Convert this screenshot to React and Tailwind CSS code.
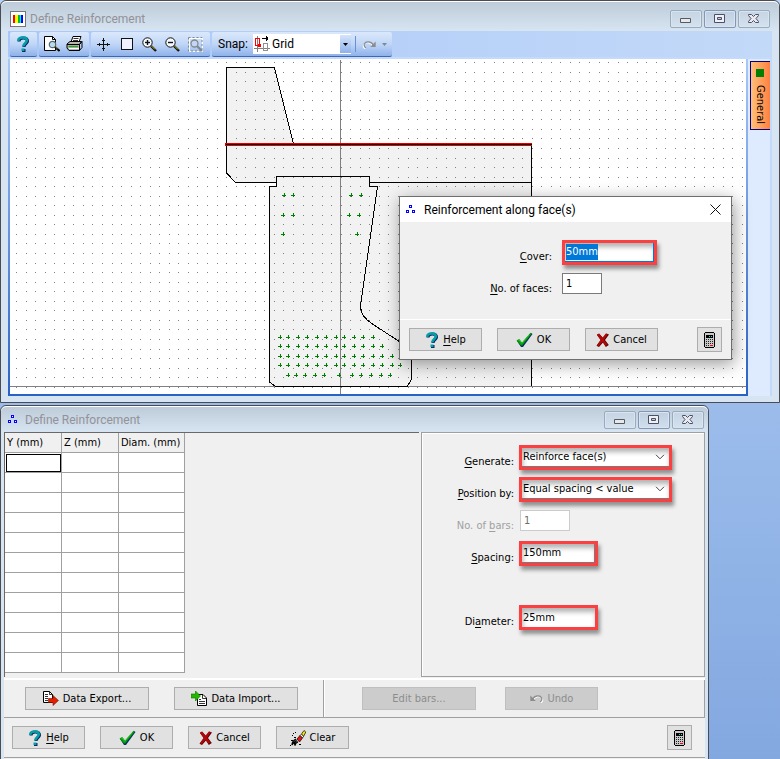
import React, { useEffect, useRef } from "react";

const GRID_STEP = 9.55;

// dots of the snap grid, one 1px square each
const gridDots = (() => {
  let d = "";
  for (let row = 0; row < 35; row++) {
    for (let col = 0; col < 200; col++) {
      d += `M${Math.round(6 + col * GRID_STEP)} ${Math.round(3 + row * GRID_STEP)}h1v1h-1z`;
    }
  }
  return d;
})();

const tendonRows = [
  { y: 136, xs: [274, 283] },
  { y: 136, xs: [341, 351] },
  { y: 156, xs: [273, 283, 339, 349] },
  { y: 175, xs: [273, 347] },
  { y: 278, xs: [270, 278, 288, 297, 307, 316, 326, 334, 344, 353, 363] },
  { y: 287, xs: [270, 278, 288, 297, 307, 316, 326, 334, 344, 353, 363, 372] },
  { y: 297, xs: [270, 278, 288, 297, 307, 316, 326, 334, 344, 353, 363, 372, 382] },
  { y: 306, xs: [270, 278, 288, 297, 307, 316, 326, 334, 344, 353, 363, 372, 382, 390] },
  { y: 316, xs: [278, 286, 295, 305, 314, 329, 342, 351, 361, 371, 380] },
];

const tendons = tendonRows
  .map(({ y, xs }) => xs.map((x) => `M${x - 2} ${y}h4v1h-4zM${x} ${y - 2}h1v4h-1z`).join(""))
  .join("");

/* ---------- icons ---------- */

const HelpIcon = ({ className = "w-[14px] h-4" }) => (
  <svg viewBox="0 0 14 16" className={className} aria-hidden="true">
    <path d="M3 5.5C3 2.5 5 2 7.5 2s4 1 4 3.2C11.5 7.5 8 8 8 11" fill="none" stroke="#0a1f5c" strokeWidth="3" />
    <path d="M2.2 5C2.2 2 4.5 1.5 7 1.5s3.8 1 3.8 3C10.8 7 7.2 7.5 7.2 10.5" fill="none" stroke="#00a0a8" strokeWidth="2.6" />
    <path d="M6 13h3.5v3H6z" fill="#0a1f5c" />
    <path d="M5.5 12.5h3v2.6h-3z" fill="#00a0a8" />
  </svg>
);

const CheckIcon = () => (
  <svg viewBox="0 0 17 16" className="w-[17px] h-4" aria-hidden="true">
    <path d="M1 9l2.5-1.5L6 11 15 1l1.5 1L7 15H5z" fill="#0b2d6b" />
    <path d="M.5 8.5L3 7l3 3.5L14.5.8l1.3.6L6.2 13.6H5z" fill="#00a000" />
    <path d="M2 8.2l1-.4 2.8 3.6L13 3" fill="none" stroke="#35d035" strokeWidth=".8" />
  </svg>
);

const CrossIcon = () => (
  <svg viewBox="0 0 13 14" className="w-[13px] h-[14px]" aria-hidden="true">
    <path d="M1 2l2-1.2L7 5l3.5-4.5L13 1.5 9 7l3.8 5-3 2L7 9.500 3 14 .5 12.8 4.6 7z" fill="#5a0000" />
    <path d="M.8 1.6L3.2.6 6.6 4.6 9.8.4l2 .8L8 6.8l3.6 4.800-2.200 1.200-3-4-3.600 4.400-1.800-.9L4.800 7z" fill="#b00808" />
  </svg>
);

const CalculatorIcon = () => (
  <svg viewBox="0 0 11 16" className="w-[11px] h-4" shapeRendering="crispEdges" aria-hidden="true">
    <path d="M1 0h9v1h1v14h-1v1H1v-1H0V1h1z" fill="#000" />
    <path d="M1 1h9v14H1z" fill="#c8c8c8" />
    <path d="M2 3h7v3H2z" fill="#000" />
    <path d="M5 4h1v1H5zM7 4h1v1H7z" fill="#00e0d0" />
    <path d="M2 7h1v1H2zM4 7h1v1H4zM6 7h1v1H6zM8 7h1v1H8zM2 9h1v1H2zM4 9h1v1H4zM6 9h1v1H6zM8 9h1v1H8zM2 11h1v1H2zM4 11h1v1H4zM6 11h1v1H6zM8 11h1v1H8zM2 13h1v1H2zM4 13h1v1H4z" fill="#222" />
    <path d="M6 13h3v1H6z" fill="#f00" />
  </svg>
);

const ExportIcon = () => (
  <svg viewBox="0 0 16 15" className="w-4 h-[15px]" aria-hidden="true">
    <path d="M.5.5h6l3 3v8h-9z" fill="#fff" stroke="#000" />
    <path d="M6.5.5v3h3M2 3.5h3M2 5.5h3M2 7.5h3M2 9.5h3" fill="none" stroke="#000" strokeWidth=".8" />
    <path d="M5.5 7.5H10V4.5l5.500 5L10 14.500v-3H5.500z" fill="#e02000" stroke="#7a1500" strokeWidth=".6" />
  </svg>
);

const ImportIcon = () => (
  <svg viewBox="0 0 16 15" className="w-4 h-[15px]" aria-hidden="true">
    <path d="M6.5 3.5H12l3.5 3.5v7.5h-9z" fill="#fff" stroke="#000" />
    <path d="M11.5 3.5v4h4M8 8.5h2M8 10.5h6M8 12.5h6" fill="none" stroke="#000" strokeWidth=".8" />
    <path d="M0 3h4.500V0l5 5-5 5V7H0z" fill="#22b800" stroke="#127000" strokeWidth=".6" />
  </svg>
);

const ClearIcon = () => (
  <svg viewBox="0 0 16 16" className="w-4 h-4" aria-hidden="true">
    <path d="M11.5 4L14 .5l1.800 1.500-2.300 4.500z" fill="#ffe800" stroke="#000" strokeWidth=".7" />
    <path d="M10 5.500L11.500 4l2 2.500L12.500 8z" fill="#fff" stroke="#000" strokeWidth=".6" />
    <path d="M7 9l3-3.500L12.500 8l-3 4z" fill="#e81010" stroke="#000" strokeWidth=".7" />
    <path d="M6 9c-2 1-4 3-4 6 1-2 2-2.500 3-3-.5 1-.5 2 0 3 .5-2 1.500-2.500 3-3" fill="#444" stroke="#000" strokeWidth="1.300" />
    <path d="M1 10.500h2M4 7.500h2M3 3.500h1M5 2.500h1M2 5.500h1M9 14.500h2M0 15.500h1" stroke="#000" />
  </svg>
);

const UndoIcon = ({ flip }) => (
  <svg viewBox="0 0 14 9" className={flip ? "w-[14px] h-[9px] -scale-x-100" : "w-[14px] h-[9px]"} aria-hidden="true">
    <path d="M3 6.500C5 2 11 1.500 12.500 5c.4 2-1 3.500-2 4" fill="none" stroke="#fff" strokeWidth="1.200" />
    <path d="M2 6C4.500 1 10 .8 11.800 4c.6 2-.6 3.200-1.600 4" fill="none" stroke="#8c8c8c" strokeWidth="1.300" />
    <path d="M.3 1.500V7h5.500z" fill="#8c8c8c" />
  </svg>
);

const BarsIcon = () => (
  <svg viewBox="0 0 9 9" className="w-[9px] h-[9px]" shapeRendering="crispEdges" aria-hidden="true">
    <path d="M3.5.5h2v2h-2zM.5 5.5h2v2h-2zM6.500 5.500h2v2h-2z" fill="#fff" stroke="#00f" />
  </svg>
);

const AppIcon = () => (
  <svg viewBox="0 0 16 16" className="w-4 h-4" shapeRendering="crispEdges" aria-hidden="true">
    <path d="M.5.5h15v15H.5z" fill="#fff" stroke="#777" />
    <path d="M3 4h2v8H3z" fill="#f00" />
    <path d="M5 4h3v8H5z" fill="#ff0" />
    <path d="M8 4h2v8H8z" fill="#00c020" />
    <path d="M10 4h1v8h-1z" fill="#0ee" />
    <path d="M11 4h2v8h-2z" fill="#00f" />
    <path d="M0 15h1v1H0z" fill="#f0f" />
  </svg>
);

const PreviewIcon = () => (
  <svg viewBox="0 0 16 16" className="w-4 h-4" aria-hidden="true">
    <path d="M.5.5h8l3 3v11H.5z" fill="#fff" stroke="#000" />
    <path d="M8.500.5v3h3" fill="none" stroke="#000" />
    <circle cx="8.500" cy="8.500" r="3.200" fill="#b8dcec" stroke="#5a6670" strokeWidth="1.200" />
    <path d="M11 11l4.500 4" stroke="#000" strokeWidth="2" />
    <path d="M11.500 11l2 1.800" stroke="#e0c000" strokeWidth=".8" />
  </svg>
);

const PrintIcon = () => (
  <svg viewBox="0 0 17 16" className="w-[17px] h-4" aria-hidden="true">
    <path d="M5 6l2-5.500h8L13 6z" fill="#fff" stroke="#000" />
    <path d="M7.500 2.500h5M7 4.500h5" stroke="#000" strokeWidth=".8" />
    <path d="M1 8l3-2.500h11.500l-2 3v6H3L1 12z" fill="#b8b8b0" stroke="#000" />
    <path d="M1 8.500h12.500l2.500-3v6l-2.500 3" fill="none" stroke="#000" />
    <path d="M2.500 10.500h9.500" stroke="#28a028" strokeWidth="1.400" />
    <path d="M3 12.500h10" stroke="#fff" />
  </svg>
);

const PanIcon = () => (
  <svg viewBox="0 0 13 13" className="w-[13px] h-[13px]" shapeRendering="crispEdges" aria-hidden="true">
    <path d="M6 1h1v11H6zM1 6h11v1H1zM5 2h3v1H5zM5 10h3v1H5zM2 5h1v3H2zM10 5h1v3h-1zM6 0h1v1H6zM6 12h1v1H6zM0 6h1v1H0zM12 6h1v1h-1z" fill="#111" />
  </svg>
);

const ExtentsIcon = () => (
  <svg viewBox="0 0 12 12" className="w-3 h-3" shapeRendering="crispEdges" aria-hidden="true">
    <path d="M.5.5h11v11H.5z" fill="#f0f0ff" stroke="#111" />
  </svg>
);

const ZoomIcon = ({ plus }) => (
  <svg viewBox="0 0 15 15" className="w-[15px] h-[15px]" aria-hidden="true">
    <circle cx="5.500" cy="5.500" r="4.700" fill="#f4f8ff" stroke="#111" />
    <path d="M3 5.500h5" stroke="#111" strokeWidth="1.400" />
    {plus && <path d="M5.500 3v5" stroke="#111" strokeWidth="1.400" />}
    <path d="M9 9l5 5" stroke="#111" strokeWidth="2.400" />
    <path d="M9.500 9l3.500 3.500" stroke="#e8c800" strokeWidth=".9" />
  </svg>
);

const ZoomWindowIcon = () => (
  <svg viewBox="0 0 15 15" className="w-[15px] h-[15px]" aria-hidden="true">
    <path d="M1.500 1.500h13v13h-13z" fill="none" stroke="#fff" />
    <path d="M.5.5H14V14H.5z" fill="none" stroke="#808890" strokeDasharray="2 2" />
    <circle cx="6.500" cy="6.500" r="3.500" fill="#c4d6f0" stroke="#808890" strokeWidth="1.300" />
    <path d="M9 9l5 5" stroke="#808890" strokeWidth="2.200" />
  </svg>
);

const SnapIcon = () => (
  <svg viewBox="0 0 16 16" className="w-4 h-4" aria-hidden="true" shapeRendering="crispEdges">
    <path d="M3 0h1v16H3zM0 12h16v1H0z" fill="#808080" />
    <path d="M1.500 2.500h4v7h-4z" fill="none" stroke="#f00" />
    <path d="M4 8h3v3H4z" fill="#f00" />
    <path d="M9.500 7.500h4v7h-4z" fill="none" stroke="#909090" />
    <path d="M8 2h6v1H8zM12 0h1v1h-1zM12 1h2v1h-2zM12 3h2v1h-2zM12 4h1v1h-1z" fill="#000" />
  </svg>
);

/* ---------- small controls ---------- */

// label text with its keyboard mnemonic underlined
const Mnemonic = ({ text, at }) => (
  <span>
    {text.slice(0, at)}
    <span className="underline underline-offset-2">{text[at]}</span>
    {text.slice(at + 1)}
  </span>
);

const PushButton = ({ icon, children, className = "w-[73px]", disabled }) => (
  <button
    type="button"
    disabled={disabled}
    className={`flex h-[23px] shrink-0 items-center justify-center gap-1 border border-[#adadad] bg-[#e1e1e1] disabled:border-[#bfbfbf] disabled:bg-[#cccccc] disabled:text-[#8c8c8c] ${className}`}
  >
    {icon}
    {children}
  </button>
);

const CalculatorButton = () => (
  <button type="button" aria-label="Calculator" className="ml-auto flex h-[25px] w-[25px] shrink-0 items-center justify-center border border-[#adadad] bg-[#e1e1e1]">
    <CalculatorIcon />
  </button>
);

// red frame drawn round a value the user has to fill in
const Marked = ({ className, children }) => (
  <div className={`relative flex h-[25px] border-3 border-[#fa4040] bg-white shadow-[2px_4px_4px_rgba(0,0,0,0.4),inset_1px_4px_5px_rgba(0,0,0,0.3)] ${className}`}>
    {children}
  </div>
);

const MarkedSelect = ({ id, options, className }) => (
  <Marked className={className}>
    <select id={id} className="w-full appearance-none border-b border-[#7a7a7a] bg-transparent pl-px outline-none">
      {options.map((option) => (
        <option key={option}>{option}</option>
      ))}
    </select>
    <svg viewBox="0 0 10 6" className="pointer-events-none absolute right-1 top-1.5 h-1.5 w-2.5" aria-hidden="true">
      <path d="M1 .8l4 4 4-4" fill="none" stroke="#444" />
    </svg>
  </Marked>
);

const CaptionButtons = () => (
  <div className="ml-auto flex gap-0.5">
    <button type="button" aria-label="Minimize" className="flex h-[18px] w-8 items-center justify-center rounded-xs border border-[#9aabbd] bg-linear-to-b from-[#c6d4e3] to-[#d4e1ee] shadow-[inset_0_0_0_1px_#d8e4f0]">
      <svg viewBox="0 0 12 12" className="h-3 w-3" aria-hidden="true">
        <path d="M.5 5.500h10v4H.5z" fill="#e8e8e8" stroke="#555b66" />
      </svg>
    </button>
    <button type="button" aria-label="Restore" className="flex h-[18px] w-8 items-center justify-center rounded-xs border border-[#8595b4] bg-linear-to-b from-[#c0cfe0] to-[#d0deed] shadow-[inset_0_0_0_1px_#d8e4f0]">
      <svg viewBox="0 0 12 12" className="h-3 w-3" aria-hidden="true">
        <path d="M.5 1.500h10v8H.5z" fill="#f0f0f4" stroke="#4a5068" />
        <path d="M3.500 4.500h4v2h-4z" fill="#c0ccdc" stroke="#4a5068" />
      </svg>
    </button>
    <button type="button" aria-label="Close" className="flex h-[18px] w-8 items-center justify-center rounded-xs border border-[#9aabbd] bg-linear-to-b from-[#c6d4e3] to-[#d4e1ee] shadow-[inset_0_0_0_1px_#d8e4f0]">
      <svg viewBox="0 0 12 12" className="h-3 w-3" aria-hidden="true">
        <path d="M.5 1.500h3l2 2 2-2h3v1L8 5.500l2.500 3v1h-3l-2-2-2 2h-3v-1L3 5.500l-2.500-3z" fill="#eaeaee" stroke="#4a5068" />
      </svg>
    </button>
  </div>
);

const ToolGroup = ({ children, className }) => (
  <div className={`flex h-[25px] items-center rounded-xs border-b border-[#3f66ae] bg-linear-to-b from-[#dbe8fb] via-[#c0d6f7] to-[#8fb2ea] ${className}`}>
    {children}
  </div>
);

const ToolButton = ({ label, children, disabled }) => (
  <button type="button" aria-label={label} disabled={disabled} className="flex h-6 w-[23px] items-center justify-center">
    {children}
  </button>
);

const Toolbar = () => (
  <div className="flex h-[26px] items-start gap-0.5 bg-linear-to-r from-[#a9c7f8] to-[#c3d9f8] px-0.5 pt-px">
    <ToolGroup className="w-[27px] pl-px">
      <ToolButton label="Help">
        <HelpIcon />
      </ToolButton>
    </ToolGroup>
    <ToolGroup className="w-[50px] pl-px">
      <ToolButton label="Print preview">
        <PreviewIcon />
      </ToolButton>
      <ToolButton label="Print">
        <PrintIcon />
      </ToolButton>
    </ToolGroup>
    <ToolGroup className="w-[119px] pl-px">
      <ToolButton label="Pan">
        <PanIcon />
      </ToolButton>
      <ToolButton label="Zoom extents">
        <ExtentsIcon />
      </ToolButton>
      <ToolButton label="Zoom in">
        <ZoomIcon plus />
      </ToolButton>
      <ToolButton label="Zoom out">
        <ZoomIcon />
      </ToolButton>
      <ToolButton label="Zoom window" disabled>
        <ZoomWindowIcon />
      </ToolButton>
    </ToolGroup>
    <ToolGroup className="w-[180px] pl-1.5">
      <label htmlFor="snap" className="w-[35px] text-xs font-[Roboto,sans-serif]">
        Snap:
      </label>
      <div className="flex h-5 w-[98px] items-center bg-white">
        <div className="pl-px">
          <SnapIcon />
        </div>
        <select id="snap" className="h-5 min-w-0 flex-1 appearance-none pl-0.5 text-xs font-[Roboto,sans-serif] outline-none">
          <option>Grid</option>
        </select>
        <div className="flex h-[18px] w-[11px] items-center justify-center bg-linear-to-b from-[#d4e4fb] to-[#8fb2ea]">
          <svg viewBox="0 0 5 3" className="h-[3px] w-[5px]" aria-hidden="true">
            <path d="M0 0h5L2.500 3z" />
          </svg>
        </div>
      </div>
      <div className="ml-1 mr-0.5 h-4 w-px bg-[#6b8fd0]" />
      <button type="button" aria-label="Redo" disabled className="flex h-5 items-center gap-1.5 px-1">
        <UndoIcon flip />
        <svg viewBox="0 0 5 3" className="h-[3px] w-[5px]" aria-hidden="true">
          <path d="M0 0h5L2.500 3z" fill="#7f8896" />
        </svg>
      </button>
    </ToolGroup>
  </div>
);

const SectionDrawing = () => (
  <svg className="block h-[335px] w-full" shapeRendering="crispEdges" role="img" aria-label="Beam and slab section">
    <g fill="#f2f2f2">
      <path d="M216 8h49l19 77h238v242H259V127h7v-4h-40l-10-9z" />
    </g>
    <path d={gridDots} fill="#808080" />
    <path d="M330.500 1v334M0 327.500h2000" stroke="#808080" fill="none" />
    <g fill="none" stroke="#000">
      <path d="M216.500 85V8.500h48L283.500 85" />
      <path d="M216.500 85v29l9 9.500h41M359.500 123.500h162M521.500 85v242" />
      <path d="M266.500 117.500h93v10h8L350.500 247c0 8 4 13 12 18l26 17 13 18v20.500l-4 6.500H265l-5.500-4V127.500h7z" />
    </g>
    <path d="M215 84h307v3H215z" fill="#e00000" />
    <path d="M216 85h306v1H216z" />
    <path d={tendons} fill="#008000" />
  </svg>
);

const FaceDialog = () => {
  const coverRef = useRef(null);

  useEffect(() => {
    coverRef.current?.focus();
    coverRef.current?.select();
  }, []);

  return (
    <div role="dialog" aria-label="Reinforcement along face(s)" className="absolute left-[391px] top-[137px] w-[333px] border border-[#6e6e6e] bg-[#f0f0f0] shadow-[2px_4px_16px_rgba(0,0,0,0.4)]">
      <div className="flex h-[25px] items-center bg-white pl-1.5 pr-2.5">
        <BarsIcon />
        <h2 className="ml-[9px] text-xs font-[Roboto,sans-serif]">Reinforcement along face(s)</h2>
        <button type="button" aria-label="Close" className="ml-auto">
          <svg viewBox="0 0 11 11" className="h-[11px] w-[11px]" aria-hidden="true">
            <path d="M.5.5l10 10M10.500.5l-10 10" stroke="#111" fill="none" />
          </svg>
        </button>
      </div>
      <div className="grid h-[97px] grid-cols-[152px_1fr] content-start gap-x-2.5 pt-[18px]">
        <label htmlFor="cover" className="flex h-8 items-center justify-end pt-0.5">
          <Mnemonic text="Cover:" at={0} />
        </label>
        <Marked className="w-[95px]">
          <input id="cover" ref={coverRef} defaultValue="50mm" className="w-full border-b border-r border-[#0078d7] bg-transparent pl-px outline-none selection:bg-[#0078d7] selection:text-white" />
        </Marked>
        <label htmlFor="faces" className="flex h-8 items-center justify-end pt-0.5">
          <Mnemonic text="No. of faces:" at={0} />
        </label>
        <input id="faces" defaultValue="1" className="mt-px h-[21px] w-10 border border-[#7a7a7a] bg-white px-[3px] outline-none" />
      </div>
      <div className="flex items-center gap-[15px] border-t border-white px-[9px] py-[7px]">
        <PushButton icon={<HelpIcon />}>
          <Mnemonic text="Help" at={0} />
        </PushButton>
        <PushButton icon={<CheckIcon />}>OK</PushButton>
        <PushButton icon={<CrossIcon />}>Cancel</PushButton>
        <CalculatorButton />
      </div>
    </div>
  );
};

const DrawingWindow = () => (
  <section className="rounded-t-md border border-[#4b4b52] bg-[#d7e4f1]">
    <header className="flex h-[30px] items-center rounded-t-md border-t border-white bg-linear-to-b from-[#becbd9] to-[#d7e4f1] pl-[9px] pr-[9px] pt-1.5 pb-0.5">
      <AppIcon />
      <h1 className="ml-1 text-xs text-[#929298] font-[Roboto,sans-serif]">Define Reinforcement</h1>
      <CaptionButtons />
    </header>
    <div className="mx-[7px] mb-1.5">
      <Toolbar />
      <div className="flex bg-[#c3dafa] pt-0.5">
        <div className="relative min-w-0 flex-1 bg-linear-to-b from-[#a9c7f8] to-[#2a62c4] px-0.5 pb-0.5">
          <div className="bg-white">
            <SectionDrawing />
          </div>
          {/* position is relative to the canvas frame */}
          <FaceDialog />
        </div>
        <div className="mr-0.5 w-[22px] bg-[#deeafe] pl-0.5 pt-0.5">
          <button type="button" className="flex h-[69px] w-5 flex-col items-center gap-2 border border-r-0 border-[#000080] bg-linear-to-r from-[#ffc078] to-[#ff8040] pr-px pt-[7px]">
            <span className="h-2 w-2 shrink-0 bg-[#008000]" />
            <span className="leading-none [writing-mode:vertical-rl]">General</span>
          </button>
        </div>
      </div>
    </div>
  </section>
);

const columns = ["Y (mm)", "Z (mm)", "Diam. (mm)"];

const BarTable = () => (
  <table className="w-[180px] table-fixed border-separate border-spacing-0 bg-white">
    <colgroup>
      <col className="w-[57px]" />
      <col className="w-[57px]" />
      <col className="w-[66px]" />
    </colgroup>
    <thead>
      <tr>
        {columns.map((name) => (
          <th key={name} className="h-5 whitespace-nowrap border-b border-r border-[#a0a0a0] bg-[#f0f0f0] p-0 pl-0.5 text-left font-normal leading-none">
            {name}
          </th>
        ))}
      </tr>
    </thead>
    <tbody>
      {Array.from({ length: 11 }, (_, row) => (
        <tr key={row}>
          {columns.map((name, col) => (
            <td key={name} className="h-5 border-b border-r border-[#a0a0a0] p-0">
              {row === 0 && col === 0 && <div className="ml-px h-[18px] border border-black" />}
            </td>
          ))}
        </tr>
      ))}
    </tbody>
  </table>
);

const FieldLabel = ({ htmlFor, text, at, disabled }) => (
  <label htmlFor={htmlFor} className={`flex h-8 items-center justify-end pt-0.5 ${disabled ? "text-[#a0a0a0]" : ""}`}>
    <Mnemonic text={text} at={at} />
  </label>
);

const GenerateForm = () => (
  <form className="grid w-[284px] shrink-0 grid-cols-[92px_1fr] content-start gap-x-[5px] border border-[#a0a0a0] pt-3 shadow-[inset_1px_1px_0_#fff]">
    <FieldLabel htmlFor="generate" text="Generate:" at={0} />
    <MarkedSelect id="generate" className="w-[153px]" options={["Reinforce face(s)", "Single bar", "Line of bars"]} />
    <FieldLabel htmlFor="position" text="Position by:" at={0} />
    <MarkedSelect id="position" className="w-[153px]" options={["Equal spacing < value", "Number of bars"]} />
    <FieldLabel htmlFor="bars" text="No. of bars:" at={7} disabled />
    <input id="bars" defaultValue="1" disabled className="ml-px mt-px h-[21px] w-[50px] border border-[#cccccc] bg-white px-[3px] text-[#6d6d6d]" />
    <FieldLabel htmlFor="spacing" text="Spacing:" at={0} />
    <Marked className="w-[79px]">
      <input id="spacing" defaultValue="150mm" className="w-full border-b border-r border-[#7a7a7a] bg-transparent pl-px outline-none" />
    </Marked>
    <div className="col-span-2 h-8" />
    <FieldLabel htmlFor="diameter" text="Diameter:" at={2} />
    <Marked className="w-[79px]">
      <input id="diameter" defaultValue="25mm" className="w-full bg-transparent pl-px outline-none" />
    </Marked>
  </form>
);

const DataWindow = () => (
  <section className="mr-[71px] mt-0.5 rounded-t-md border border-[#4b4b52] bg-[#d7e4f1]">
    <header className="flex h-[26px] items-center rounded-t-md border-t border-white bg-linear-to-b from-[#becbd9] to-[#d7e4f1] pl-[7px] pr-1">
      <BarsIcon />
      <h1 className="ml-2 text-xs text-[#929298] font-[Roboto,sans-serif]">Define Reinforcement</h1>
      <CaptionButtons />
    </header>
    <div className="mx-[3px] bg-[#f0f0f0] pb-1">
      <div className="flex gap-0.5">
        <div className="h-[245px] min-w-0 flex-1 border-l border-t border-[#696969]">
          <BarTable />
        </div>
        <GenerateForm />
      </div>
      <div className="mt-px flex border-b border-[#a0a0a0] border-t-2 border-t-white">
        <div className="flex w-[320px] items-center gap-[25px] border-r border-[#a0a0a0] py-[7px] pl-[21px]">
          <PushButton className="w-[124px]" icon={<ExportIcon />}>
            Data Export...
          </PushButton>
          <PushButton className="w-[124px]" icon={<ImportIcon />}>
            Data Import...
          </PushButton>
        </div>
        <div className="flex flex-1 items-center gap-[29px] border-l border-r border-l-white border-r-[#a0a0a0] py-[7px] pl-[37px]">
          <PushButton className="w-[114px]" disabled>
            Edit bars...
          </PushButton>
          <PushButton className="w-[93px]" disabled icon={<UndoIcon />}>
            Undo
          </PushButton>
        </div>
      </div>
      <div className="flex items-center gap-[15px] border-b border-[#a0a0a0] py-[7px] pl-2 pr-[13px]">
        <PushButton icon={<HelpIcon />}>
          <Mnemonic text="Help" at={0} />
        </PushButton>
        <PushButton icon={<CheckIcon />}>OK</PushButton>
        <PushButton icon={<CrossIcon />}>Cancel</PushButton>
        <PushButton icon={<ClearIcon />}>Clear</PushButton>
        <CalculatorButton />
      </div>
    </div>
  </section>
);

const App = () => (
  <main className="h-screen overflow-hidden bg-linear-to-b from-[#b8d4f8] to-[#83a8e0] text-[11px] leading-4 text-black font-['DejaVu_Sans_Condensed','DejaVu_Sans',sans-serif]">
    <DrawingWindow />
    <DataWindow />
  </main>
);

export default App;
